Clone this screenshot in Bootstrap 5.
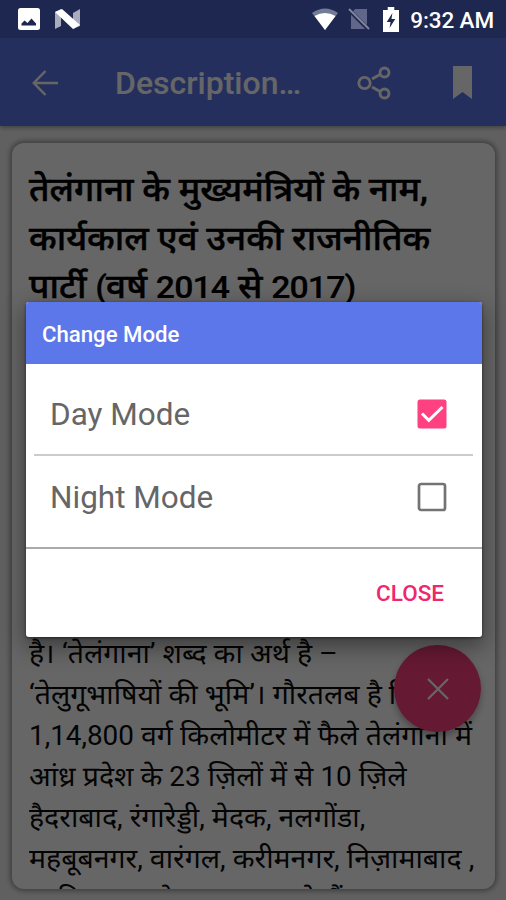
<!DOCTYPE html>
<html lang="hi">
<head>
<meta charset="utf-8">
<meta name="viewport" content="width=device-width, initial-scale=1">
<title>Description</title>
<link href="https://cdn.jsdelivr.net/npm/bootstrap@5.3.0/dist/css/bootstrap.min.css" rel="stylesheet">
<style>
:root{--brand:#5c77e9;--accent:#ff4081}
body{font-family:Roboto,"Noto Sans Devanagari","Noto Sans",sans-serif;background:#f0f0f0;width:506px;height:900px;overflow:hidden}
svg{display:block;flex:none}
.statusbar{height:38px;background:#1d274f;z-index:30;padding:0 12px 0 18px;color:#fff;position:relative}
.wifi{margin-right:9px}
.sim{margin-right:13px}
.battery{margin-right:11px}
.nougat{margin-left:15px}
.share{margin-left:54px}
.clock{font-size:22.5px;font-weight:500;line-height:38px;letter-spacing:-.1px;padding-top:1px}
.appbar{height:88px;background:var(--brand);padding:1px 34px 0 32px;box-shadow:0 2px 4px rgba(0,0,0,.3)}
.appbar-title{font-size:32px;font-weight:500;margin-left:57px;width:188px;white-space:nowrap}
.page-area{height:774px;padding:17px 11px 11px 12px}
.article{height:746px;border:0;border-radius:12px;box-shadow:0 0 5px 2px rgba(0,0,0,.36);overflow:hidden;padding:23px 17px 0;color:#000}
.article h1{font-size:32.8px;font-weight:500;line-height:48.7px;margin:0 0 321px;height:146px;-webkit-text-stroke:.5px #000}
.article span{display:block;white-space:nowrap;width:max-content;transform-origin:0 50%}
.article h1 span{height:48.7px;transform:scaleX(1.073)}
.article h1 b{font-size:31.5px;font-weight:500;letter-spacing:-.8px;-webkit-text-stroke:.2px #000}
.article p{font-size:27.6px;line-height:41.1px;margin:0;color:#0a0a0a}
.article p span{height:41px;transform:scaleX(1.032)}
.article p b{font-size:27px;font-weight:400}
.article p .clipped{word-spacing:5px}
.fab{left:394px;top:645px;width:87px;height:87px;background:var(--accent);box-shadow:0 4px 7px rgba(0,0,0,.3)}
.scrim{background:rgba(0,0,0,.6);z-index:20}
.dialog{left:26px;top:302px;width:456px;height:335px;z-index:40;border-radius:3px;overflow:hidden;background:#fff}
.dialog-shadow{left:26px;top:302px;width:456px;height:335px;z-index:35;border-radius:3px;box-shadow:0 8px 22px 2px rgba(0,0,0,.4),0 1px 3px rgba(0,0,0,.5)}
.dialog-head{height:62px;background:var(--brand);color:#fff;font-size:22.2px;font-weight:500;padding:3px 16px 0}
.mode-row{color:#666;font-size:31.5px;padding:0 35px 0 24px}
.day{height:90px;padding-top:10px}
.day span{padding-top:2px}
.night{height:91px;padding-bottom:9px}
.night span{padding-top:2px}
.rule{height:2px;background:#ccc;margin:0 9px 0 8px}
.rule-full{height:2px;background:#aaa}
.close-btn{color:#f0266f;font-size:22.5px;font-weight:500;padding:2px 38px 0 0;border:0;background:none}
</style>
</head>
<body class="position-relative">
<header class="statusbar d-flex align-items-center">
  <svg width="22" height="22" viewBox="0 0 22 22"><rect width="22" height="22" rx="2.5" fill="#fff"/><path d="M3.500 17.500v-2l3-3 3 2.500 4-4.500 4.500 5v2z" fill="#1d274f"/></svg>
  <svg class="nougat" width="25" height="20" viewBox="0 0 25 20"><path d="M0 3l6-3v17l-6 3zM18 4l7-4v17l-7 3z" fill="#a8acbd"/><path d="M0 3L7 0 25 16l-7 4z" fill="#fff"/></svg>
  <div class="d-flex align-items-center ms-auto">
    <svg class="wifi" width="28" height="22" viewBox="0 0 28 22"><path d="M1 5Q14-4 27 5L14 22z" fill="#747b97"/><path d="M3.500 8Q14 2 24.500 8L14 22z" fill="#fff"/></svg>
    <svg class="sim" width="22" height="22" viewBox="0 0 22 22"><path d="M7 1h12v20H3V6z" fill="#60678a"/><path d="M0 1l20 20" stroke="#1d274f" stroke-width="4"/><path d="M1 1l20 20" stroke="#818799" stroke-width="2"/></svg>
    <svg class="battery" width="16" height="25" viewBox="0 0 17 25" preserveAspectRatio="none"><path d="M5 0h7v3h5v22H0V3h5z" fill="#fff"/><path d="M10 6L4 15h4l-1 6 6-9H9z" fill="#1d274f"/></svg>
    <span class="clock">9:32 AM</span>
  </div>
</header>
<nav class="appbar d-flex align-items-center text-white">
  <svg width="26" height="26" viewBox="0 0 26 26" fill="none" stroke="#fff" stroke-width="2.500"><path d="M26 13H2M13.500 1L1.800 13l11.700 12"/></svg>
  <div class="appbar-title">Description…</div>
  <svg class="share" width="34" height="34" viewBox="0 0 34 34" fill="none" stroke="#fff" stroke-width="2.800"><circle cx="7.500" cy="17" r="5.700"/><circle cx="27.500" cy="6.500" r="4.500"/><circle cx="27.500" cy="27.500" r="4.500"/><path d="M15 13l8-4.500M15 21l8 4.500"/></svg>
  <svg class="ms-auto" width="19" height="33" viewBox="0 0 19 33"><path d="M0 0h19v33l-9.500-7L0 33z" fill="#fff"/></svg>
</nav>
<main class="page-area">
  <article class="card article">
    <h1><span>तेलंगाना के मुख्यमंत्रियों के नाम,</span><span>कार्यकाल एवं उनकी राजनीतिक</span><span>पार्टी <b>(</b>वर्ष <b>2014</b> से <b>2017)</b></span></h1>
    <p><span>है। ‘तेलंगाना’ शब्द का अर्थ है –</span><span>‘तेलुगूभाषियों की भूमि’। गौरतलब है कि</span><span><b>1,14,800</b> वर्ग किलोमीटर में फैले तेलंगाना में</span><span>आंध्र प्रदेश के <b>23</b> ज़िलों में से <b>10</b> ज़िले</span><span>हैदराबाद, रंगारेड्डी, मेदक, नलगोंडा,</span><span>महबूबनगर, वारंगल, करीमनगर, निज़ामाबाद ,</span><span class="clipped">आदिलाबाद के खम्मम आते हैं।</span></p>
  </article>
</main>
<div class="fab position-absolute rounded-circle d-flex align-items-center justify-content-center"><svg width="22" height="22" viewBox="0 0 22 22" stroke="#fff" stroke-width="2.200"><path d="M1 1l20 20M21 1L1 21"/></svg></div>
<div class="scrim position-absolute top-0 start-0 w-100 h-100"></div>
<div class="dialog-shadow position-absolute"></div>
<section class="dialog position-absolute d-flex flex-column">
  <div class="dialog-head d-flex align-items-center">Change Mode</div>
  <div class="mode-row day d-flex align-items-center justify-content-between"><span>Day Mode</span>
    <svg width="30" height="30" viewBox="0 0 30 30"><rect x=".5" y=".5" width="29" height="29" rx="2.500" fill="#ff4081"/><path d="M5 14.500l6.800 6.800L25.500 8" fill="none" stroke="#fff" stroke-width="3"/></svg></div>
  <div class="rule"></div>
  <div class="mode-row night d-flex align-items-center justify-content-between"><span>Night Mode</span>
    <svg width="30" height="30" viewBox="0 0 30 30"><rect x="2" y="2" width="26" height="26" rx="2" fill="none" stroke="#737373" stroke-width="2.700"/></svg></div>
  <div class="rule-full"></div>
  <div class="flex-fill d-flex align-items-center justify-content-end"><button class="close-btn">CLOSE</button></div>
</section>
<script src="https://cdn.jsdelivr.net/npm/bootstrap@5.3.0/dist/js/bootstrap.bundle.min.js"></script>
</body>
</html>
